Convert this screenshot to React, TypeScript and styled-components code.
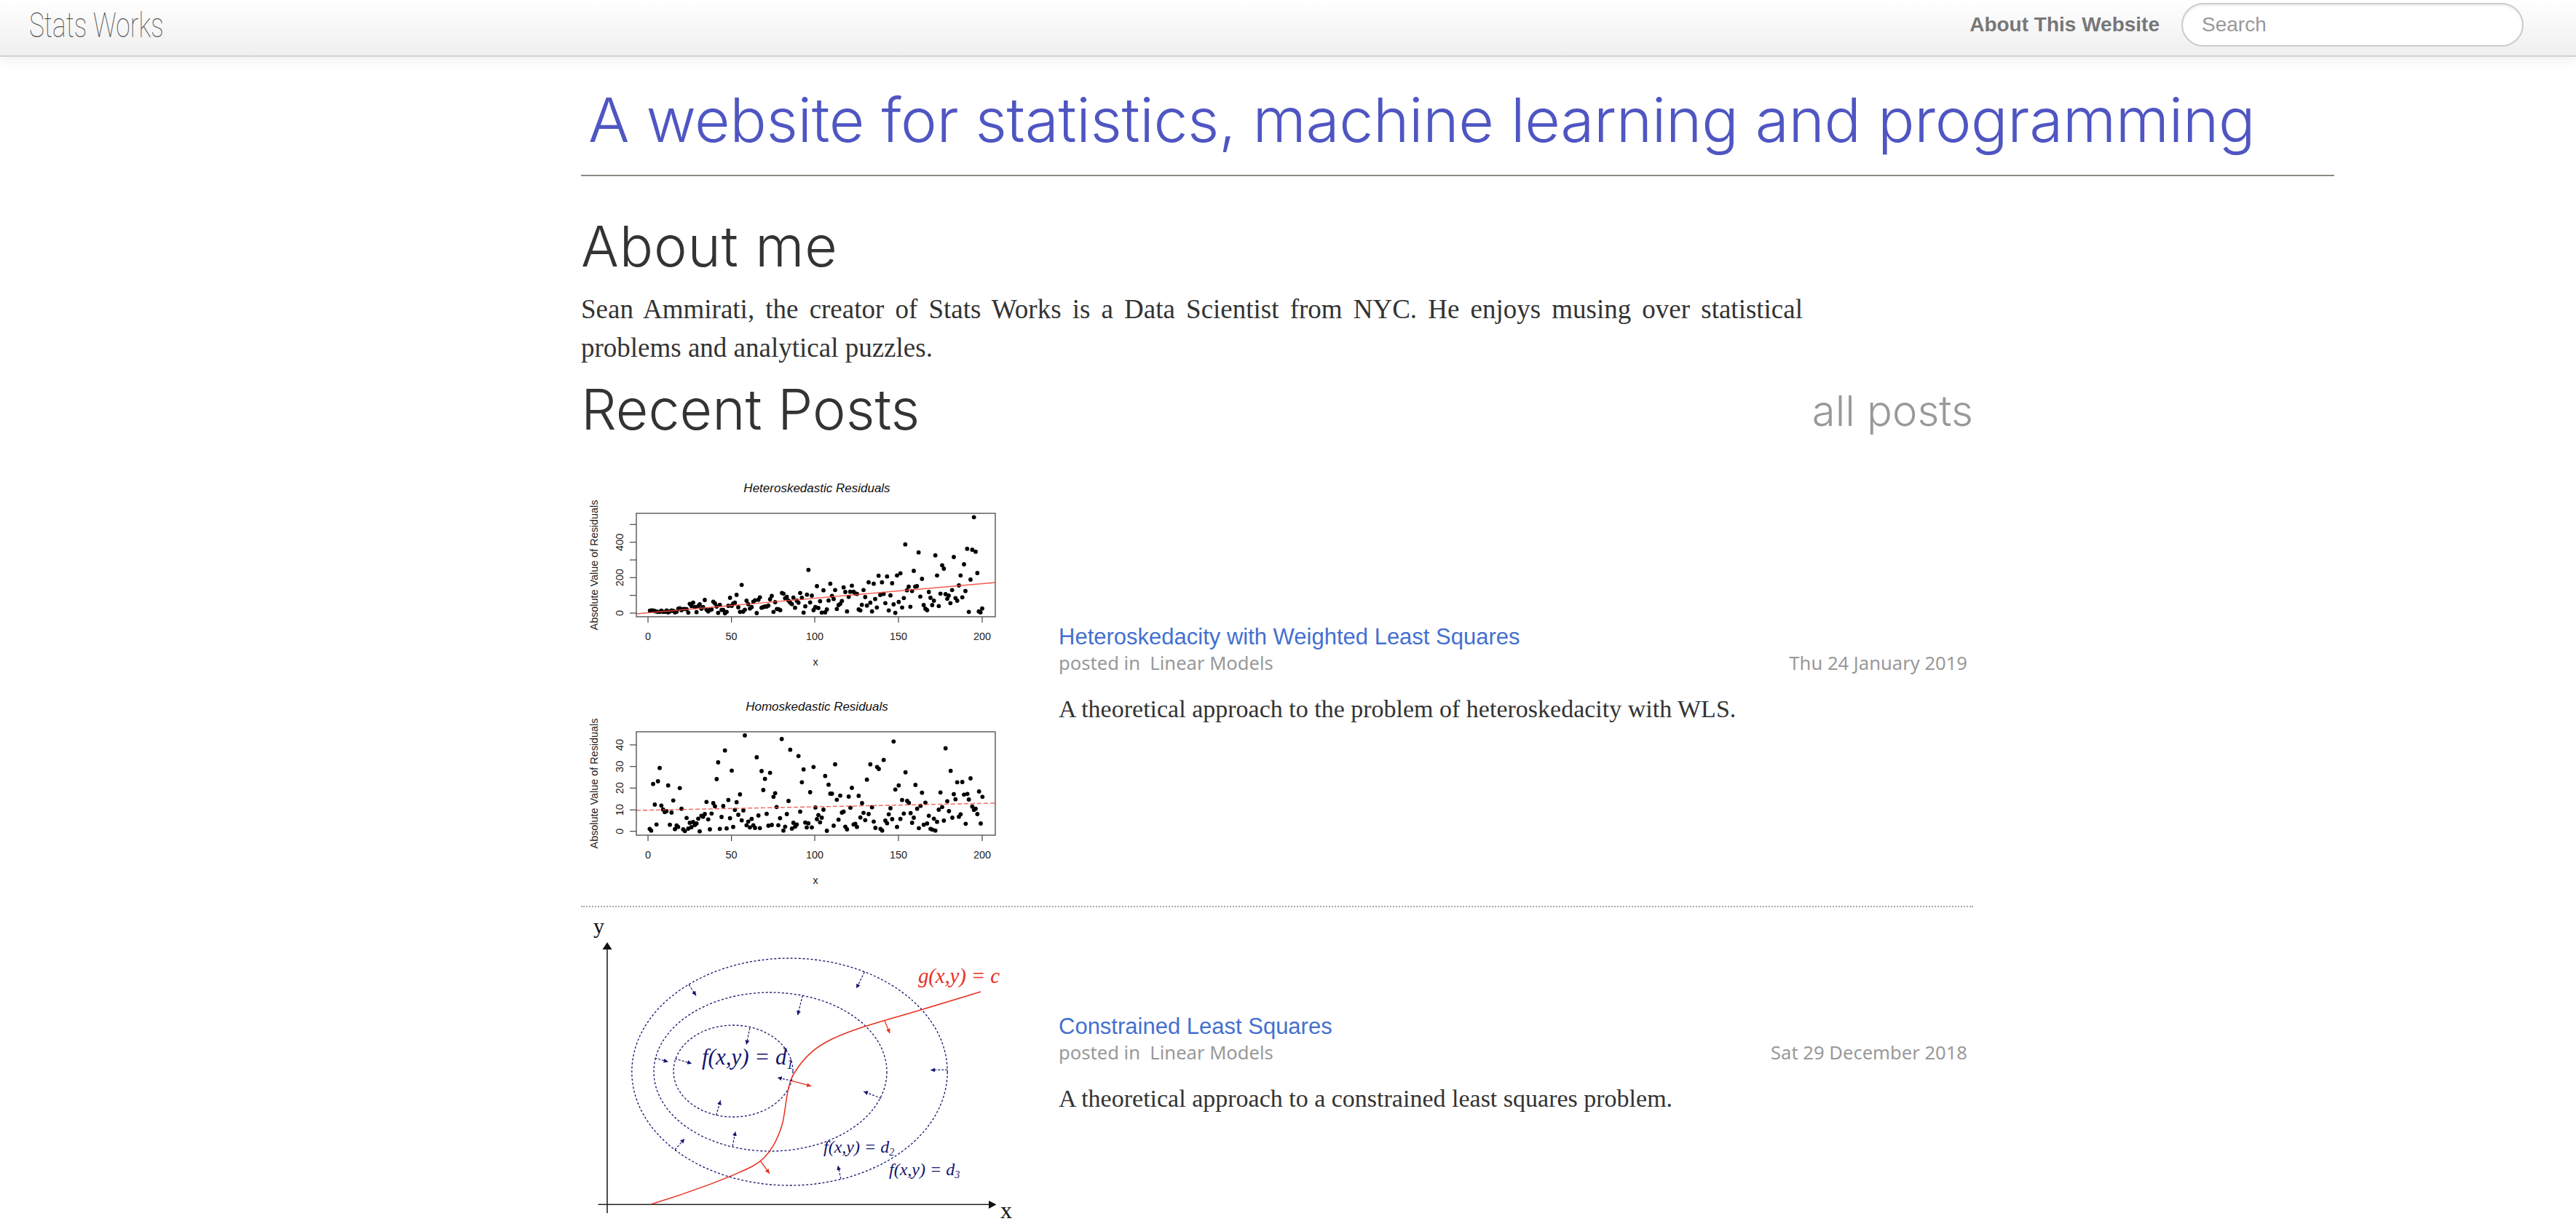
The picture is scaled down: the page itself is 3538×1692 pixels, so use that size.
import * as React from 'react';
import styled, { createGlobalStyle } from 'styled-components';

type Pts = number[][];

// scatter points read off the chart, as 3x offsets from the plot's crop corner
const heteroLeft: Pts = [[68,413],[74,412],[80,412],[86,414],[92,416],[100,418],[108,418],[115,413],[122,418],[130,418],[137,412],[143,420],[150,416],[157,412],[164,414],[171,420],[178,417],[185,405],[191,403],[198,411],[205,406],[212,406],[219,407],[226,421],[232,385],[239,394],[246,380],[253,398],[260,419],[267,394],[273,387],[280,405],[287,398],[294,369],[301,409],[308,416],[315,410],[322,408],[329,376],[336,383],[343,396],[349,422],[356,389],[363,410],[370,410],[377,424],[384,418],[391,393],[398,360],[405,393],[411,384],[418,380],[425,348],[432,399],[439,418],[446,307],[452,417],[459,409],[466,372],[473,386],[480,404],[487,398],[494,376],[501,370],[508,423],[515,368],[521,358],[528,401],[535,398],[542,396],[549,396],[556,392],[563,366],[570,352],[577,418],[584,378],[591,406],[598,407],[605,411],[612,340],[618,343],[625,362],[632,356],[639,372],[646,380],[653,386],[659,359],[666,401],[673,372],[680,380],[687,340],[694,360],[701,421],[708,395],[715,347],[721,245],[728,379],[735,351],[742,411],[749,400]];
const heteroRight: Pts = [[6,312],[0,398],[12,402],[19,374],[26,421],[33,329],[40,420],[47,408],[54,371],[61,302],[68,352],[75,365],[81,328],[88,406],[95,390],[102,385],[109,373],[116,317],[123,336],[130,416],[137,356],[143,335],[150,310],[157,335],[164,342],[171,344],[178,408],[185,412],[191,389],[198,328],[205,357],[212,392],[219,296],[226,380],[233,416],[240,302],[246,365],[253,400],[260,269],[267,348],[274,296],[281,344],[288,382],[295,272],[302,412],[309,350],[316,300],[322,387],[329,422],[336,268],[343,377],[350,259],[357,400],[364,361],[370,140],[377,329],[384,314],[391,397],[398,332],[405,249],[411,314],[418,312],[425,173],[432,355],[439,282],[446,390],[453,405],[460,411],[467,336],[474,360],[481,390],[488,372],[494,185],[501,268],[508,394],[515,343],[522,226],[529,240],[536,345],[543,364],[549,351],[556,382],[563,328],[570,192],[577,361],[584,372],[591,309],[598,268],[605,358],[612,222],[618,332],[625,158],[632,418],[639,285],[646,162],[653,28],[660,170],[667,258],[673,416],[680,420],[687,404]];
const homoLeft: Pts = [[67,412],[73,419],[81,227],[88,312],[95,394],[101,216],[108,161],[115,316],[122,332],[129,343],[136,339],[143,233],[150,395],[157,345],[164,295],[171,413],[178,398],[184,404],[191,244],[198,329],[205,414],[212,421],[219,367],[226,411],[232,387],[239,405],[246,384],[253,396],[260,390],[267,370],[273,422],[280,358],[287,362],[294,351],[301,301],[308,373],[315,414],[322,349],[329,306],[336,319],[343,207],[349,138],[356,412],[363,363],[370,318],[377,89],[384,410],[391,293],[398,368],[405,172],[411,404],[418,334],[425,302],[432,354],[439,270],[446,377],[453,336],[459,27],[466,397],[473,382],[480,406],[487,371],[494,397],[501,408],[508,117],[515,357],[521,409],[528,174],[535,252],[542,206],[549,350],[556,399],[563,181],[570,396],[577,280],[584,265],[590,322],[597,397],[604,368],[611,42],[618,419],[625,403],[632,351],[639,297],[646,86],[653,411],[659,387],[666,403],[673,394],[680,112],[687,341],[694,220],[701,167],[708,386],[714,406],[721,389],[728,261],[735,406],[742,157]];
const homoRight: Pts = [[0,324],[6,372],[12,355],[19,385],[26,366],[33,333],[40,194],[47,420],[54,230],[61,267],[68,267],[75,399],[81,146],[88,292],[95,374],[102,275],[109,345],[116,341],[123,403],[130,414],[137,279],[144,325],[150,243],[157,394],[164,391],[171,404],[178,276],[185,365],[192,306],[198,346],[205,376],[212,209],[219,351],[226,146],[233,323],[240,382],[247,408],[254,157],[261,165],[268,412],[275,419],[281,128],[288,378],[295,389],[302,352],[309,327],[316,372],[322,52],[329,250],[336,404],[343,233],[350,371],[357,293],[364,349],[371,179],[378,297],[385,305],[392,347],[398,387],[405,366],[412,231],[419,329],[426,409],[433,317],[439,263],[446,395],[453,304],[460,390],[467,358],[474,412],[481,415],[488,370],[494,419],[501,383],[508,333],[515,262],[522,322],[529,378],[536,80],[543,298],[550,339],[557,173],[564,366],[570,269],[577,290],[584,220],[591,362],[598,352],[605,219],[612,271],[619,391],[626,268],[632,291],[639,204],[646,320],[653,334],[660,329],[667,351],[674,258],[681,390],[688,280]];

const GlobalStyle = createGlobalStyle`
  html, body {
    margin: 0;
    height: 1692px;
    overflow: hidden;
    background: #fff;
    font-family: "Liberation Serif", serif;
  }
`;

const Navbar = styled.header`
  height: 76px;
  box-sizing: content-box;
  display: flex;
  align-items: center;
  justify-content: space-between;
  padding: 0 72px 0 40px;
  background: linear-gradient(to bottom, #ffffff, #efefef);
  border-bottom: 2px solid #d2d2d2;
  box-shadow: 0 4px 16px rgba(0, 0, 0, 0.07);
`;

const Brand = styled.a`
  display: inline-block;
  width: 184px;
  font-family: Roboto, sans-serif;
  font-weight: 100;
  font-size: 48px;
  line-height: 60px;
  color: #555;
  white-space: nowrap;
  transform: scaleX(0.735);
  transform-origin: left center;
  margin-top: -6px;
`;

const NavRight = styled.div`
  display: flex;
  align-items: center;
  gap: 30px;
`;

const NavLink = styled.a`
  font-family: "Liberation Sans", sans-serif;
  font-weight: 700;
  font-size: 28px;
  color: #777;
  margin-top: -8px;
`;

const SearchInput = styled.input`
  box-sizing: border-box;
  width: 470px;
  height: 60px;
  padding: 0 26px;
  margin-top: -8px;
  border: 2px solid #ccc;
  border-radius: 30px;
  background: #fff;
  box-shadow: inset 0 2px 3px rgba(0, 0, 0, 0.08);
  font-family: "Liberation Sans", sans-serif;
  font-size: 28px;
  &::placeholder {
    color: #999;
  }
`;

const Main = styled.main`
  padding: 0 332px 0 798px;
`;

const Title = styled.h1`
  margin: 0;
  padding: 36px 0 24px 10px;
  border-bottom: 2px solid #8c8782;
  font-family: Inter, sans-serif;
  font-weight: 300;
  font-size: 84px;
  line-height: 102px;
  letter-spacing: -0.36px;
  color: #4f56c2;
  white-space: nowrap;
`;

const Heading = styled.h2`
  margin: 0;
  font-family: Inter, sans-serif;
  font-weight: 300;
  font-size: 77px;
  line-height: 100px;
  color: #333;
`;

const AboutHeading = styled(Heading)`
  margin-top: 46px;
  letter-spacing: 0.9px;
`;

const Bio = styled.p`
  width: 1678px;
  margin: 10px 0 0;
  font-size: 37px;
  line-height: 53px;
  color: #333;
  text-align: justify;
`;

const SectionHeader = styled.div`
  width: 1912px;
  display: flex;
  align-items: flex-start;
  justify-content: space-between;
  margin-top: 8px;
`;

const AllPosts = styled.a`
  font-family: Inter, sans-serif;
  font-weight: 300;
  font-size: 58px;
  line-height: 104px;
  color: #999;
`;

const PostList = styled.div`
  width: 1912px;
  margin-top: 25px;
`;

const PostRow = styled.article<{ $last?: boolean }>`
  display: grid;
  grid-template-columns: 655px 1fr;
  align-items: center;
  border-bottom: ${(p) => (p.$last ? 'none' : '2px dotted #aaa')};
`;

const Figure = styled.svg`
  display: block;
  width: 600px;
`;

const PostBody = styled.div`
  padding: 0 8px 30px 1px;
`;

const PostTitle = styled.a`
  display: block;
  font-family: "Liberation Sans", sans-serif;
  font-size: 31px;
  line-height: 36px;
  color: #4470d0;
`;

const PostMeta = styled.div`
  display: flex;
  justify-content: space-between;
  font-family: "Noto Sans", sans-serif;
  font-size: 25.6px;
  line-height: 35px;
  color: #999;
`;

const PostSummary = styled.p`
  margin: 21px 0 0;
  font-size: 34px;
  line-height: 50px;
  color: #333;
`;

const PlotText = styled.text`
  font-family: "Liberation Sans", sans-serif;
  font-size: 14.4px;
  fill: #222;
`;

const PlotTitle = styled(PlotText)`
  font-style: italic;
  font-size: 17px;
  fill: #111;
`;

const DiagramText = styled.text<{ $color?: string; $size: number }>`
  font-family: "Liberation Serif", serif;
  font-style: italic;
  font-size: ${(p) => p.$size}px;
  fill: ${(p) => p.$color || '#14146e'};
`;

const AxisName = styled.text<{ $size: number }>`
  font-family: "Liberation Serif", serif;
  font-size: ${(p) => p.$size}px;
  fill: #111;
`;

const xTickPos = [[890, '0'], [1004.6, '50'], [1119, '100'], [1234, '150'], [1349, '200']] as [number, string][];

interface PlotProps {
  title: string;
  top: number;
  yTicks: [number, string][];
  line: React.ReactNode;
  cropY: number;
  left: Pts;
  right: Pts;
}

const Plot = ({ title, top, yTicks, line, cropY, left, right }: PlotProps) => {
  const bottom = top + 142;
  return (
    <g>
      <PlotTitle x={1122} y={top - 29} textAnchor="middle">{title}</PlotTitle>
      <PlotText transform={`translate(821 ${top + 71}) rotate(-90)`} textAnchor="middle">
        Absolute Value of Residuals
      </PlotText>
      {yTicks.map(([y, label], i) => (
        <g key={i}>
          <line x1={865} x2={874} y1={y} y2={y} stroke="#444" strokeWidth={1.2} />
          {label && (
            <PlotText transform={`translate(856 ${y}) rotate(-90)`} textAnchor="middle">{label}</PlotText>
          )}
        </g>
      ))}
      {xTickPos.map(([x, label]) => (
        <g key={label}>
          <line x1={x} x2={x} y1={bottom} y2={bottom + 8} stroke="#444" strokeWidth={1.2} />
          <PlotText x={x} y={bottom + 32} textAnchor="middle">{label}</PlotText>
        </g>
      ))}
      <PlotText x={1120} y={bottom + 67} textAnchor="middle">x</PlotText>
      {left.map(([x, y], i) => (
        <circle key={`l${i}`} cx={870 + x / 3} cy={cropY + y / 3} r={2.9} fill="#000" />
      ))}
      {right.map(([x, y], i) => (
        <circle key={`r${i}`} cx={1120 + x / 3} cy={cropY + y / 3} r={2.9} fill="#000" />
      ))}
      {line}
      <rect x={874} y={top} width={493} height={142} fill="none" stroke="#555" strokeWidth={1.4} />
    </g>
  );
};

const ResidualsFigure = () => (
  <Figure viewBox="798 640 600 603" height={603}>
    <Plot
      title="Heteroskedastic Residuals"
      top={704}
      cropY={700}
      left={heteroLeft}
      right={heteroRight}
      yTicks={[[719.3, ''], [743.7, '400'], [768, ''], [792.3, '200'], [816.7, ''], [841, '0']]}
      line={<line x1={874} y1={842} x2={1367} y2={799} stroke="#f2483c" strokeWidth={1.4} strokeOpacity={0.9} />}
    />
    <Plot
      title="Homoskedastic Residuals"
      top={1004}
      cropY={1000}
      left={homoLeft}
      right={homoRight}
      yTicks={[[1022, '40'], [1051.7, '30'], [1081.3, '20'], [1111.3, '10'], [1140.7, '0']]}
      line={<line x1={874} y1={1112} x2={1367} y2={1102} stroke="#f2483c" strokeWidth={1.4} strokeDasharray="6 3" strokeOpacity={0.85} />}
    />
  </Figure>
);

const zx = (x: number) => 780 + x / 2.529;
const zy = (y: number) => 1250 + y / 3;

const blueArrows = [
  [1030, 258, 1002, 325], [420, 310, 445, 355], [815, 355, 798, 435], [632, 488, 620, 557],
  [302, 612, 348, 628], [372, 615, 430, 635], [778, 706, 728, 693], [1318, 660, 1260, 662],
  [1088, 778, 1027, 750], [515, 848, 530, 787], [572, 975, 582, 915], [372, 990, 405, 945],
  [948, 1110, 938, 1056],
];

const redArrows = [
  [1100, 458, 1118, 510], [778, 706, 845, 728], [668, 1035, 700, 1088],
];

const navy = '#14146e';
const red = '#e8301f';

const ConstraintFigure = () => (
  <Figure viewBox="798 1247 600 463" height={463}>
    <defs>
      <marker id="navyHead" markerWidth="8" markerHeight="8" refX="6" refY="3" orient="auto" markerUnits="userSpaceOnUse">
        <path d="M0 0L6 3L0 6Z" fill={navy} />
      </marker>
      <marker id="redHead" markerWidth="8" markerHeight="8" refX="6" refY="3" orient="auto" markerUnits="userSpaceOnUse">
        <path d="M0 0L6 3L0 6Z" fill={red} />
      </marker>
    </defs>

    <AxisName $size={30} x={815} y={1283}>y</AxisName>
    <AxisName $size={32} x={1374} y={1674}>x</AxisName>
    <line x1={834} y1={1303} x2={834} y2={1667} stroke="#222" strokeWidth={1.6} />
    <path d="M834 1295L840.5 1305H827.5Z" fill="#111" />
    <line x1={821.5} y1={1655.3} x2={1360} y2={1655.3} stroke="#222" strokeWidth={1.6} />
    <path d="M1368.5 1655.3L1358 1650V1661Z" fill="#111" />

    <g fill="none" stroke={navy} strokeWidth={1.3} strokeDasharray="3 2.6">
      <ellipse cx={1084.5} cy={1473} rx={216.7} ry={156} />
      <ellipse cx={1058} cy={1473} rx={160} ry={109} />
      <ellipse cx={1007} cy={1472} rx={82} ry={63} />
    </g>

    <path
      d="M894 1655C950 1638 1005 1617 1033 1603C1060 1589 1070 1560 1075 1543C1080 1520 1080 1490 1092 1473C1105 1452 1120 1440 1135 1432C1165 1415 1215 1403 1268 1387L1347 1363"
      fill="none"
      stroke={red}
      strokeWidth={1.5}
    />

    {blueArrows.map(([a, b, c, d], i) => (
      <line
        key={i}
        x1={zx(a)} y1={zy(b)} x2={zx(c)} y2={zy(d)}
        stroke={navy}
        strokeWidth={1.2}
        strokeDasharray="3 2"
        markerEnd="url(#navyHead)"
      />
    ))}
    {redArrows.map(([a, b, c, d], i) => (
      <line
        key={i}
        x1={zx(a)} y1={zy(b)} x2={zx(c)} y2={zy(d)}
        stroke={red}
        strokeWidth={1.3}
        markerEnd="url(#redHead)"
      />
    ))}

    <DiagramText $size={29} $color={red} x={1261} y={1351} textLength={112}>g(x,y) = c</DiagramText>
    <DiagramText $size={31} x={964} y={1463}>
      f(x,y) = d<tspan dy={6} fontSize={18}>1</tspan>
    </DiagramText>
    <DiagramText $size={24} x={1131} y={1584}>
      f(x,y) = d<tspan dy={4} fontSize={14}>2</tspan>
    </DiagramText>
    <DiagramText $size={24} x={1221} y={1615}>
      f(x,y) = d<tspan dy={4} fontSize={14}>3</tspan>
    </DiagramText>
  </Figure>
);

const posts = [
  {
    title: 'Heteroskedacity with Weighted Least Squares',
    category: 'Linear Models',
    date: 'Thu 24 January 2019',
    summary: 'A theoretical approach to the problem of heteroskedacity with WLS.',
    figure: <ResidualsFigure />,
  },
  {
    title: 'Constrained Least Squares',
    category: 'Linear Models',
    date: 'Sat 29 December 2018',
    summary: 'A theoretical approach to a constrained least squares problem.',
    figure: <ConstraintFigure />,
  },
];

const App = () => (
  <>
    <GlobalStyle />
    <Navbar>
      <Brand>Stats Works</Brand>
      <NavRight>
        <NavLink>About This Website</NavLink>
        <SearchInput placeholder="Search" />
      </NavRight>
    </Navbar>
    <Main>
      <Title>A website for statistics, machine learning and programming</Title>
      <AboutHeading>About me</AboutHeading>
      <Bio>
        Sean Ammirati, the creator of Stats Works is a Data Scientist from NYC. He enjoys musing
        over statistical problems and analytical puzzles.
      </Bio>
      <SectionHeader>
        <Heading>Recent Posts</Heading>
        <AllPosts>all posts</AllPosts>
      </SectionHeader>
      <PostList>
        {posts.map((post, i) => (
          <PostRow key={post.title} $last={i === posts.length - 1}>
            {post.figure}
            <PostBody>
              <PostTitle>{post.title}</PostTitle>
              <PostMeta>
                <span>posted in&nbsp; {post.category}</span>
                <span>{post.date}</span>
              </PostMeta>
              <PostSummary>{post.summary}</PostSummary>
            </PostBody>
          </PostRow>
        ))}
      </PostList>
    </Main>
  </>
);

export default App;
